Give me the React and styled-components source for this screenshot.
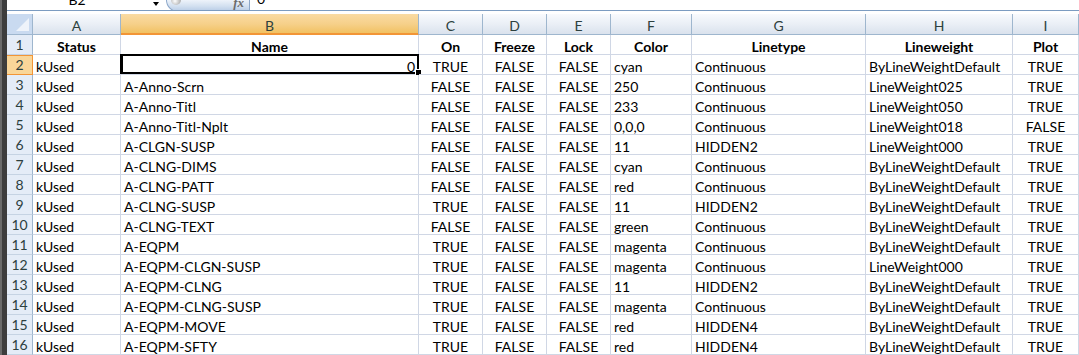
import React from "react";
import styled, { createGlobalStyle, css } from "styled-components";

const GlobalStyle = createGlobalStyle`
  html, body { margin: 0; padding: 0; background: #ffffff; overflow: hidden; }
  body { font-family: Lato, "Open Sans", sans-serif; }
`;

const COLS = [
  { key: "A", w: 88 },
  { key: "B", w: 298 },
  { key: "C", w: 64 },
  { key: "D", w: 64 },
  { key: "E", w: 64 },
  { key: "F", w: 81 },
  { key: "G", w: 174 },
  { key: "H", w: 147 },
  { key: "I", w: 66 },
];

const HEADERS = ["Status", "Name", "On", "Freeze", "Lock", "Color", "Linetype", "Lineweight", "Plot"];

const DATA = [
  ["kUsed", "0", "TRUE", "FALSE", "FALSE", "cyan", "Continuous", "ByLineWeightDefault", "TRUE"],
  ["kUsed", "A-Anno-Scrn", "FALSE", "FALSE", "FALSE", "250", "Continuous", "LineWeight025", "TRUE"],
  ["kUsed", "A-Anno-Titl", "FALSE", "FALSE", "FALSE", "233", "Continuous", "LineWeight050", "TRUE"],
  ["kUsed", "A-Anno-Titl-Nplt", "FALSE", "FALSE", "FALSE", "0,0,0", "Continuous", "LineWeight018", "FALSE"],
  ["kUsed", "A-CLGN-SUSP", "FALSE", "FALSE", "FALSE", "11", "HIDDEN2", "LineWeight000", "TRUE"],
  ["kUsed", "A-CLNG-DIMS", "FALSE", "FALSE", "FALSE", "cyan", "Continuous", "ByLineWeightDefault", "TRUE"],
  ["kUsed", "A-CLNG-PATT", "FALSE", "FALSE", "FALSE", "red", "Continuous", "ByLineWeightDefault", "TRUE"],
  ["kUsed", "A-CLNG-SUSP", "TRUE", "FALSE", "FALSE", "11", "HIDDEN2", "ByLineWeightDefault", "TRUE"],
  ["kUsed", "A-CLNG-TEXT", "FALSE", "FALSE", "FALSE", "green", "Continuous", "ByLineWeightDefault", "TRUE"],
  ["kUsed", "A-EQPM", "TRUE", "FALSE", "FALSE", "magenta", "Continuous", "ByLineWeightDefault", "TRUE"],
  ["kUsed", "A-EQPM-CLGN-SUSP", "TRUE", "FALSE", "FALSE", "magenta", "Continuous", "LineWeight000", "TRUE"],
  ["kUsed", "A-EQPM-CLNG", "TRUE", "FALSE", "FALSE", "11", "HIDDEN2", "ByLineWeightDefault", "TRUE"],
  ["kUsed", "A-EQPM-CLNG-SUSP", "TRUE", "FALSE", "FALSE", "magenta", "Continuous", "ByLineWeightDefault", "TRUE"],
  ["kUsed", "A-EQPM-MOVE", "TRUE", "FALSE", "FALSE", "red", "HIDDEN4", "ByLineWeightDefault", "TRUE"],
  ["kUsed", "A-EQPM-SFTY", "TRUE", "FALSE", "FALSE", "red", "HIDDEN4", "ByLineWeightDefault", "TRUE"],
];

const Screen = styled.div`
  display: flex;
  height: 355px;
  overflow: hidden;
`;

const WindowEdge = styled.div`
  flex: 0 0 7px;
  background: linear-gradient(to right, #6a6a6a 0 2px, #3d3d3d 2px 7px);
`;

const Workspace = styled.div`
  flex: 1;
  display: flex;
  flex-direction: column;
  min-width: 0;
`;

const FormulaBar = styled.div`
  display: flex;
  height: 12px;
  border-bottom: 1px solid #7c9cc1;
  margin-bottom: 3px;
  overflow: hidden;
  font-size: 14px;
  color: #000;
`;

const NameBox = styled.div`
  flex: 0 0 159px;
  display: flex;
  align-items: flex-end;
  background: #fff;
  position: relative;
`;

const NameText = styled.span`
  flex: 0 0 140px;
  text-align: center;
  line-height: 14px;
  margin-bottom: 3px;
`;

const DropArrow = styled.span`
  width: 0;
  height: 0;
  border-left: 3px solid transparent;
  border-right: 3px solid transparent;
  border-top: 4px solid #000;
  align-self: flex-start;
  margin: 2px 0 0 6px;
`;

const FxButton = styled.div`
  flex: 0 0 84px;
  display: flex;
  align-items: flex-end;
  justify-content: space-between;
  box-sizing: border-box;
  height: 12px;
  border: 1px solid #8ca7c9;
  border-top: none;
  border-radius: 0 0 0 12px;
  background: linear-gradient(to bottom, #eef3fa 0%, #d3e0f0 55%, #b8cce6 100%);
  padding: 0 5px 0 4px;
`;

const Knob = styled.span`
  width: 10px;
  height: 10px;
  border-radius: 50%;
  align-self: flex-start;
  margin-top: -5px;
  background: radial-gradient(circle at 40% 60%, #ffffff 0%, #c9c9c9 45%, #8f8f8f 100%);
`;

const FxLabel = styled.span`
  font-family: "Liberation Serif", serif;
  font-style: italic;
  font-weight: bold;
  font-size: 13px;
  line-height: 13px;
  color: #6c6c6c;
  margin-bottom: 2px;
`;

const FormulaInput = styled.div`
  flex: 1;
  display: flex;
  align-items: flex-end;
  background: #fff;
  padding-left: 7px;
`;

const FormulaText = styled.span`
  line-height: 14px;
  margin-bottom: 4px;
`;

const Sheet = styled.div`
  display: grid;
  grid-template-columns: 26px ${COLS.map((c) => `${c.w}px`).join(" ")};
  grid-auto-rows: 20px;
  grid-template-rows: 21px;
  font-size: 14px;
`;

const headerBase = css`
  box-sizing: border-box;
  display: flex;
  align-items: center;
  justify-content: center;
  color: #2d403e;
  font-size: 14px;
`;

const Corner = styled.div`
  ${headerBase};
  position: relative;
  background: #c9daf0;
  border-right: 1px solid #9eb6ce;
  border-bottom: 1px solid #9eb6ce;
  &::after {
    content: "";
    position: absolute;
    right: 3px;
    bottom: 3px;
    width: 0;
    height: 0;
    border-left: 13px solid transparent;
    border-bottom: 13px solid #eef3fa;
  }
`;

const ColHeader = styled.div`
  ${headerBase};
  padding-top: 2px;
  border-right: 1px solid #9eb6ce;
  border-bottom: 1px solid ${(p) => (p.$selected ? "#f29536" : "#9eb6ce")};
  background: ${(p) =>
    p.$selected
      ? "linear-gradient(to bottom, #f9dba3 0%, #f6d08a 50%, #f1c05e 100%)"
      : "linear-gradient(to bottom, #f8fafd 0%, #eaeff6 50%, #dae2ed 100%)"};
  ${(p) => p.$selected && "box-shadow: inset 0 -1px 0 #f29536;"}
`;

const RowHeader = styled.div`
  ${headerBase};
  border-right: 1px solid ${(p) => (p.$selected ? "#f29536" : "#9eb6ce")};
  border-bottom: 1px solid ${(p) => (p.$selected ? "#f29536" : "#c5d3e3")};
  background: ${(p) => (p.$selected ? "#f9d699" : "#e4ecf7")};
  ${(p) => p.$selected && "box-shadow: inset 0 1px 0 #f29536;"}
`;

const Cell = styled.div`
  box-sizing: border-box;
  position: relative;
  border-right: 1px solid #d0d7e5;
  border-bottom: 1px solid #d0d7e5;
  padding: 3px 3px 0 3px;
  line-height: 17px;
  white-space: nowrap;
  overflow: visible;
  color: #000;
  text-align: ${(p) => p.$align || "left"};
  font-weight: ${(p) => (p.$bold ? 700 : 400)};
`;

const Selection = styled.div`
  position: absolute;
  left: -1px;
  top: -1px;
  right: -1px;
  bottom: 0;
  border: 2px solid #000;
  border-left-width: 3px;
  pointer-events: none;
`;

const FillHandle = styled.div`
  position: absolute;
  right: -4px;
  bottom: -3px;
  width: 5px;
  height: 5px;
  background: #000;
  border: 1px solid #fff;
  border-right: none;
  border-bottom: none;
`;

function alignFor(colIndex, value) {
  if (colIndex === 1 && value === "0") return "right";
  if (value === "TRUE" || value === "FALSE") return "center";
  return "left";
}

export default function App() {
  return (
    <>
      <GlobalStyle />
      <Screen>
        <WindowEdge />
        <Workspace>
          <FormulaBar>
            <NameBox>
              <NameText>B2</NameText>
              <DropArrow />
            </NameBox>
            <FxButton>
              <Knob />
              <FxLabel>fx</FxLabel>
            </FxButton>
            <FormulaInput>
              <FormulaText>0</FormulaText>
            </FormulaInput>
          </FormulaBar>
          <Sheet>
            <Corner />
            {COLS.map((c) => (
              <ColHeader key={c.key} $selected={c.key === "B"}>
                {c.key}
              </ColHeader>
            ))}
            <RowHeader>1</RowHeader>
            {HEADERS.map((h) => (
              <Cell key={h} $align="center" $bold>
                {h}
              </Cell>
            ))}
            {DATA.map((row, r) => (
              <React.Fragment key={r}>
                <RowHeader $selected={r === 0}>{r + 2}</RowHeader>
                {row.map((v, c) => (
                  <Cell key={c} $align={alignFor(c, v)}>
                    {v}
                    {r === 0 && c === 1 && (
                      <Selection>
                        <FillHandle />
                      </Selection>
                    )}
                  </Cell>
                ))}
              </React.Fragment>
            ))}
          </Sheet>
        </Workspace>
      </Screen>
    </>
  );
}
